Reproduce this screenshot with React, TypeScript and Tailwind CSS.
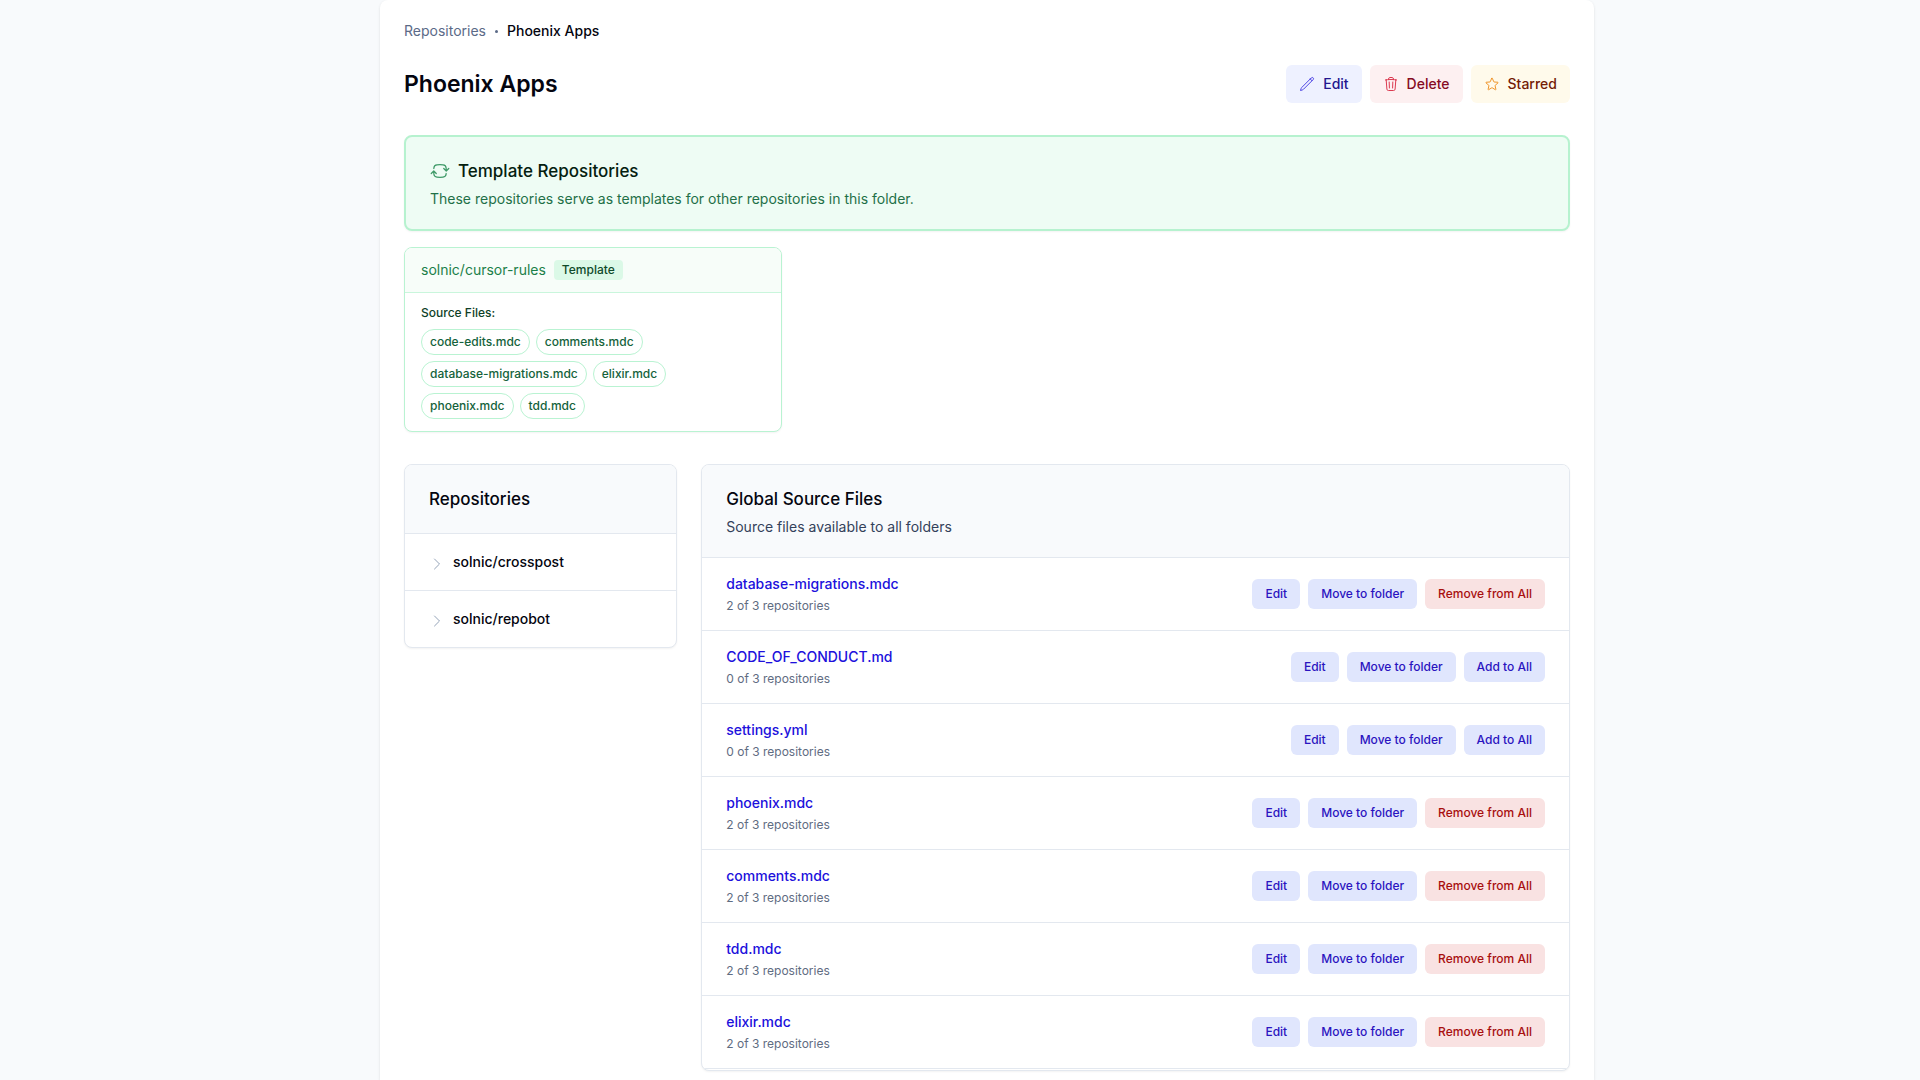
import React from "react";
import {
  HiOutlineArrowPathRoundedSquare,
  HiOutlineChevronRight,
  HiOutlinePencil,
  HiOutlineStar,
  HiOutlineTrash,
} from "react-icons/hi2";

const templateFiles = [
  "code-edits.mdc",
  "comments.mdc",
  "database-migrations.mdc",
  "elixir.mdc",
  "phoenix.mdc",
  "tdd.mdc",
];

const repositories = ["solnic/crosspost", "solnic/repobot"];

const globalFiles = [
  { name: "database-migrations.mdc", count: 2 },
  { name: "CODE_OF_CONDUCT.md", count: 0 },
  { name: "settings.yml", count: 0 },
  { name: "phoenix.mdc", count: 2 },
  { name: "comments.mdc", count: 2 },
  { name: "tdd.mdc", count: 2 },
  { name: "elixir.mdc", count: 2 },
];

function HeaderButton({
  className,
  icon,
  children,
}: {
  className: string;
  icon: React.ReactNode;
  children: React.ReactNode;
}) {
  return (
    <button
      type="button"
      className={`flex items-center gap-2 rounded-md px-[13px] py-[9px] text-sm font-medium ${className}`}
    >
      {icon}
      {children}
    </button>
  );
}

function RowButton({ danger, children }: { danger?: boolean; children: React.ReactNode }) {
  return (
    <button
      type="button"
      className={`rounded-md px-[13px] py-[7px] text-xs font-medium ${
        danger ? "bg-[#f9e2e2] text-[#a80f0f]" : "bg-[#e0e6fd] text-[#2b14c0]"
      }`}
    >
      {children}
    </button>
  );
}

export default function App() {
  return (
    <div className="min-h-screen bg-[#f8fafc] pl-[54px] font-['Inter',sans-serif] text-[#04050f]">
      <main className="mx-auto min-h-screen max-w-[1214px] rounded-t-lg bg-white px-6 pt-5 pb-2 shadow-sm">
        <nav aria-label="Breadcrumb" className="flex items-center gap-[9px] text-sm leading-[22px]">
          <a href="#repositories" className="text-[#5b6a87]">Repositories</a>
          <span className="size-[3px] rounded-full bg-[#5b6a87]" />
          <span className="font-medium">Phoenix Apps</span>
        </nav>

        <div className="mt-[23px] flex items-center justify-between">
          <h1 className="text-[23px] leading-8 font-semibold">Phoenix Apps</h1>
          <div className="flex gap-2">
            <HeaderButton
              className="bg-[#eef1ff] text-[#22168f]"
              icon={<HiOutlinePencil className="size-4 text-[#4f46e5]" />}
            >
              Edit
            </HeaderButton>
            <HeaderButton
              className="bg-[#fdf0f1] text-[#860b24]"
              icon={<HiOutlineTrash className="size-4 text-[#dc3a50]" />}
            >
              Delete
            </HeaderButton>
            <HeaderButton
              className="bg-[#fffaeb] text-[#741c06]"
              icon={<HiOutlineStar className="size-4 text-[#f0952a]" />}
            >
              Starred
            </HeaderButton>
          </div>
        </div>

        <section className="mt-8 rounded-lg border-2 border-[#b6f2cf] bg-[#eefcf4] px-6 py-5 shadow-xs">
          <h2 className="flex items-center gap-2 text-[17px] leading-7 font-medium text-[#04200f]">
            <HiOutlineArrowPathRoundedSquare className="size-5 text-[#3f9a68]" />
            Template Repositories
          </h2>
          <p className="mt-1 text-sm text-[#1f7048]">
            These repositories serve as templates for other repositories in this folder.
          </p>
        </section>

        <div className="mt-4 grid grid-cols-3 gap-4">
          <article className="overflow-hidden rounded-lg border border-[#b9f3d2] bg-white shadow-xs">
            <header className="flex items-center gap-2 border-b border-[#c9f6dc] bg-[#f7fdf9] px-4 py-3">
              <a href="#cursor-rules" className="text-sm text-[#1b8049]">solnic/cursor-rules</a>
              <span className="rounded-sm bg-[#dbf9e7] px-2 py-[2px] text-xs font-medium text-[#0e4a2a]">
                Template
              </span>
            </header>
            <div className="px-4 py-3">
              <h3 className="text-xs font-medium text-[#0f3f28]">Source Files:</h3>
              <ul className="mt-2 flex max-w-[270px] flex-wrap gap-[6px]">
                {templateFiles.map((file) => (
                  <li
                    key={file}
                    className="rounded-full border border-[#b9f3d2] px-2 py-1 text-xs font-medium text-[#14623b]"
                  >
                    {file}
                  </li>
                ))}
              </ul>
            </div>
          </article>
        </div>

        <div className="mt-8 grid grid-cols-[273fr_868fr] items-start gap-6">
          <section className="overflow-hidden rounded-lg border border-[#e3e8ef] bg-white shadow-xs">
            <h2 className="bg-[#f8fafc] px-6 py-5 text-[17px] leading-7 font-medium">Repositories</h2>
            <ul>
              {repositories.map((name) => (
                <li key={name} className="border-t border-[#e3e8ef]">
                  <button
                    type="button"
                    className="flex w-full items-end gap-2 px-6 py-[18px] text-left text-sm font-medium"
                  >
                    <HiOutlineChevronRight className="size-4 text-[#94a3b8]" />
                    {name}
                  </button>
                </li>
              ))}
            </ul>
          </section>

          <section className="overflow-hidden rounded-lg border border-[#e3e8ef] bg-white pb-px shadow-xs">
            <header className="border-b border-[#e3e8ef] bg-[#f8fafc] px-6 py-5">
              <h2 className="text-[17px] leading-7 font-medium">Global Source Files</h2>
              <p className="mt-1 text-sm text-[#33415a]">Source files available to all folders</p>
            </header>
            <ul>
              {globalFiles.map(({ name, count }) => (
                <li
                  key={name}
                  className="flex items-center justify-between border-b border-[#e3e8ef] px-6 py-4"
                >
                  <div>
                    <a href={`#${name}`} className="block text-sm font-medium text-[#2010dc]">
                      {name}
                    </a>
                    <p className="mt-1 text-xs text-[#5f6c82]">{count} of 3 repositories</p>
                  </div>
                  <div className="flex gap-2">
                    <RowButton>Edit</RowButton>
                    <RowButton>Move to folder</RowButton>
                    {count > 0 ? <RowButton danger>Remove from All</RowButton> : <RowButton>Add to All</RowButton>}
                  </div>
                </li>
              ))}
            </ul>
          </section>
        </div>
      </main>
    </div>
  );
}
